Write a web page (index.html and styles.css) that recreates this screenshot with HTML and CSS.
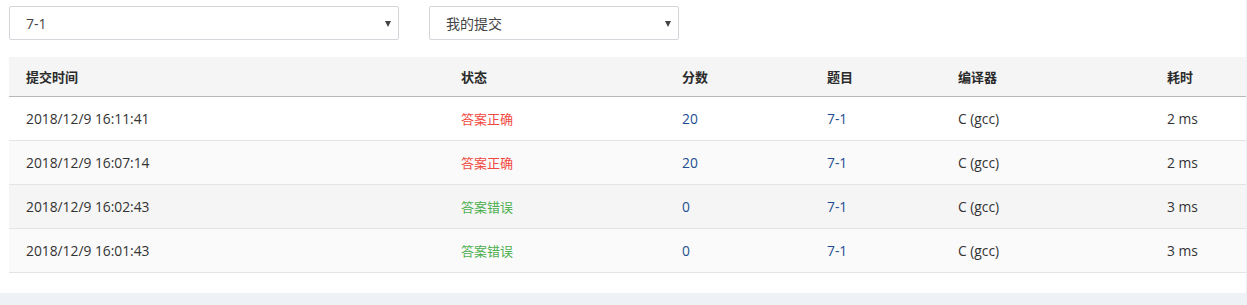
FILE: index.html
```html
<!DOCTYPE html>
<html lang="zh">
<head>
<meta charset="utf-8">
<title>提交列表</title>
<link rel="stylesheet" href="styles.css">
</head>
<body>
<div class="card">
  <div class="filters">
    <div class="select select-problem"><span class="select-text">7-1</span><span class="caret"></span></div>
    <div class="select select-scope"><span class="select-text">我的提交</span><span class="caret"></span></div>
  </div>
  <div class="table">
    <div class="row head">
      <div class="cell">提交时间</div>
      <div class="cell">状态</div>
      <div class="cell">分数</div>
      <div class="cell">题目</div>
      <div class="cell">编译器</div>
      <div class="cell">耗时</div>
    </div>
    <div class="row r1">
      <div class="cell">2018/12/9 16:11:41</div>
      <div class="cell ok">答案正确</div>
      <div class="cell num">20</div>
      <div class="cell num">7-1</div>
      <div class="cell">C (gcc)</div>
      <div class="cell">2 ms</div>
    </div>
    <div class="row r2">
      <div class="cell">2018/12/9 16:07:14</div>
      <div class="cell ok">答案正确</div>
      <div class="cell num">20</div>
      <div class="cell num">7-1</div>
      <div class="cell">C (gcc)</div>
      <div class="cell">2 ms</div>
    </div>
    <div class="row r3">
      <div class="cell">2018/12/9 16:02:43</div>
      <div class="cell wrong">答案错误</div>
      <div class="cell num">0</div>
      <div class="cell num">7-1</div>
      <div class="cell">C (gcc)</div>
      <div class="cell">3 ms</div>
    </div>
    <div class="row r4">
      <div class="cell">2018/12/9 16:01:43</div>
      <div class="cell wrong">答案错误</div>
      <div class="cell num">0</div>
      <div class="cell num">7-1</div>
      <div class="cell">C (gcc)</div>
      <div class="cell">3 ms</div>
    </div>
  </div>
</div>
</body>
</html>
```

FILE: styles.css
```css
html, body {
  margin: 0;
  padding: 0;
  background: #eef2f6;
  font-family: "Open Sans", "Noto Sans CJK SC", sans-serif;
  color: #333;
}

.card {
  width: 1237px;
  height: 287px;
  background: #fff;
  padding: 6px 0 0 9px;
}

.filters {
  display: flex;
  gap: 30px;
}

.select {
  box-sizing: border-box;
  height: 34px;
  border: 1px solid #d3d6db;
  border-radius: 2px;
  background: #fff;
  display: flex;
  align-items: center;
  justify-content: space-between;
  padding: 0 7px 0 16px;
  font-size: 14px;
  color: #444;
}

.select-problem { width: 390px; }
.select-scope { width: 250px; }

.caret {
  width: 0;
  height: 0;
  border-left: 3px solid transparent;
  border-right: 3px solid transparent;
  border-top: 6px solid #444;
  margin-top: 1px;
}

.table {
  margin-top: 17px;
  width: 1237px;
}

.row {
  display: grid;
  grid-template-columns: 435px 221px 145px 131px 209px 96px;
  height: 43px;
  border-bottom: 1px solid #e4e4e4;
  align-items: center;
  font-size: 13.8px;
}

.row.head {
  height: 39px;
  background: #f5f5f5;
  border-bottom: 1px solid #b8b8b8;
  font-weight: bold;
  font-size: 13px;
  color: #2b2b2b;
}

.cell {
  padding-left: 17px;
  white-space: nowrap;
}

.r1 { background: #fff; }
.r2 { background: #fafafa; }
.r3 { background: #f5f5f5; }
.r4 { background: #fafafa; }

.ok { color: #f0483e; font-size: 13px; }
.wrong { color: #4caf50; font-size: 13px; }
.num { color: #1d4f91; }
```
